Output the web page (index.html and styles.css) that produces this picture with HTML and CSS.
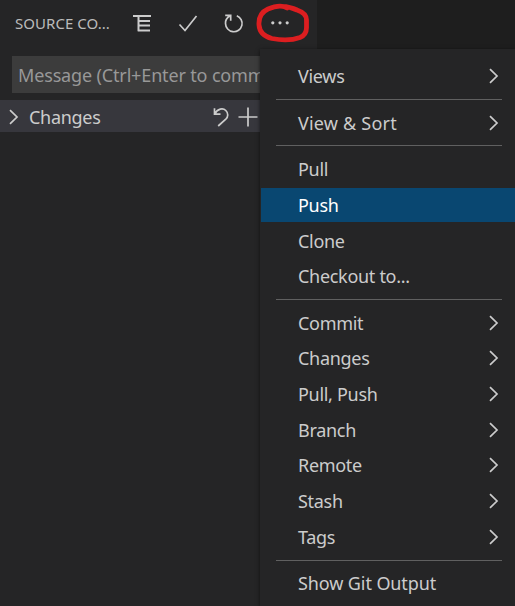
FILE: index.html
```html
<!DOCTYPE html>
<html lang="en">
<head>
<meta charset="utf-8">
<title>Source Control</title>
<link rel="stylesheet" href="styles.css">
</head>
<body>
<svg class="symbols" width="0" height="0">
  <symbol id="chevron" viewBox="0 0 10 16"><path d="M1 1.2 8 8 1 14.8"/></symbol>
</svg>
<div class="window">
  <aside class="sidebar">
    <header class="toolbar">
      <h1 class="title">SOURCE CO...</h1>
      <div class="actions">
        <svg class="icon list" viewBox="0 0 20 20"><path d="M1 3h18M6.500 3v15M6.500 8H18M6.500 12.500H18M5.700 17.500H18"/></svg>
        <svg class="icon" viewBox="0 0 20 20"><path d="M1.500 11.500 7 17.500 18.500 3"/></svg>
        <svg class="icon" viewBox="0 0 20 20"><path d="M1.200 2.300h5.500v5.500M6.500 2.600C3.500 4.400 1.200 7.300 1.500 10.600a8.300 8.300 0 1 0 11.300-7.900"/></svg>
        <svg class="icon dots" viewBox="0 0 20 20"><circle cx="2.800" cy="9.800" r="1.600"/><circle cx="10" cy="9.800" r="1.600"/><circle cx="17.200" cy="9.800" r="1.600"/></svg>
      </div>
    </header>
    <div class="message">Message (Ctrl+Enter to commit)</div>
    <div class="changes">
      <svg class="chevron"><use href="#chevron"/></svg>
      <span class="changes-label">Changes</span>
      <svg class="discard" viewBox="0 0 16 20"><path d="M1.500 1.200v6h6M1.800 6.900C4.500 1.500 10 .8 12.800 3.500s2.400 6.200 0 8.600L5.200 19"/></svg>
      <svg class="add" viewBox="0 0 20 20"><path d="M10 .5v19M.5 10h19"/></svg>
    </div>
  </aside>
  <nav class="menu">
    <div class="item"><span>Views</span><svg class="chevron"><use href="#chevron"/></svg></div>
    <hr>
    <div class="item"><span class="wide">View &amp; Sort</span><svg class="chevron"><use href="#chevron"/></svg></div>
    <hr>
    <div class="item"><span>Pull</span></div>
    <div class="item selected"><span>Push</span></div>
    <div class="item"><span>Clone</span></div>
    <div class="item"><span>Checkout to...</span></div>
    <hr>
    <div class="item"><span>Commit</span><svg class="chevron"><use href="#chevron"/></svg></div>
    <div class="item"><span>Changes</span><svg class="chevron"><use href="#chevron"/></svg></div>
    <div class="item"><span>Pull, Push</span><svg class="chevron"><use href="#chevron"/></svg></div>
    <div class="item"><span>Branch</span><svg class="chevron"><use href="#chevron"/></svg></div>
    <div class="item"><span>Remote</span><svg class="chevron"><use href="#chevron"/></svg></div>
    <div class="item"><span>Stash</span><svg class="chevron"><use href="#chevron"/></svg></div>
    <div class="item"><span>Tags</span><svg class="chevron"><use href="#chevron"/></svg></div>
    <hr>
    <div class="item"><span class="output">Show Git Output</span></div>
  </nav>
  <svg class="marker" viewBox="0 0 60 44"><path d="M33 8C28 5 20 6.500 14 9 7.500 12 4.500 18 5 25c.5 7 5 11.500 13 13.500 10 2 21 1.500 28-1 5-2 6.500-5 6.500-10v-7.500c0-5-3.500-8-9.500-10C39 8 34 6.500 28 6.300"/></svg>
</div>
</body>
</html>
```

FILE: styles.css
```css
* { box-sizing: border-box; }

body {
  margin: 0;
  background: #1e1e1e;
  font: 18px/24px "Noto Sans", "Open Sans", sans-serif;
  letter-spacing: -0.3px;
  color: #cccccc;
}

svg {
  fill: none;
  stroke: #cccccc;
  stroke-width: 1.7;
}

.symbols { position: absolute; }

.window {
  position: relative;
  width: 515px;
  height: 606px;
  overflow: hidden;
}

.sidebar {
  width: 317px;
  height: 606px;
  background: #252526;
}

.toolbar {
  display: flex;
  align-items: center;
  height: 45px;
  padding-left: 15px;
}

.title {
  width: 117px;
  margin: 0;
  font-size: 15px;
  font-weight: 400;
  letter-spacing: 0.05px;
  white-space: nowrap;
  color: #bbbbbb;
}

.actions {
  display: flex;
  gap: 26px;
}

.icon {
  width: 20px;
  height: 20px;
}

.list { stroke-width: 2; }

.dots {
  fill: #cccccc;
  stroke: none;
}

.message {
  height: 37px;
  margin: 11px 0 7px 12px;
  padding: 7px 6px;
  background: #3c3c3c;
  color: #989898;
  letter-spacing: -0.15px;
  white-space: nowrap;
}

.changes {
  display: flex;
  align-items: center;
  width: 261px;
  height: 32px;
  padding: 1px 3px 0 9px;
  background: #37373d;
}

.changes-label {
  margin: 0 auto 0 10px;
}

.chevron {
  width: 10px;
  height: 16px;
}

.discard {
  width: 16px;
  height: 20px;
  margin-right: 9px;
}

.add {
  width: 20px;
  height: 20px;
}

.menu {
  position: absolute;
  top: 49px;
  left: 260px;
  width: 255px;
  height: 557px;
  padding: 9.200px 0 0 1px;
  background: #252526;
  box-shadow: 0 1px 4px rgba(0, 0, 0, 0.6);
}

.item {
  display: flex;
  align-items: center;
  justify-content: space-between;
  height: 35.650px;
  padding: 0 16px 0 37px;
}

.selected {
  height: 34.650px;
  margin: 0.500px 0;
  background: #094771;
  color: #ffffff;
}

.wide { letter-spacing: 0.2px; }

.output { letter-spacing: -0.1px; }

hr {
  height: 1px;
  margin: 5px 13px 5px 15px;
  border: 0;
  background: #606060;
}

.marker {
  position: absolute;
  top: 0;
  left: 254px;
  width: 60px;
  height: 44px;
  stroke: #dc1e20;
  stroke-width: 4.800;
  stroke-linecap: round;
}
```
